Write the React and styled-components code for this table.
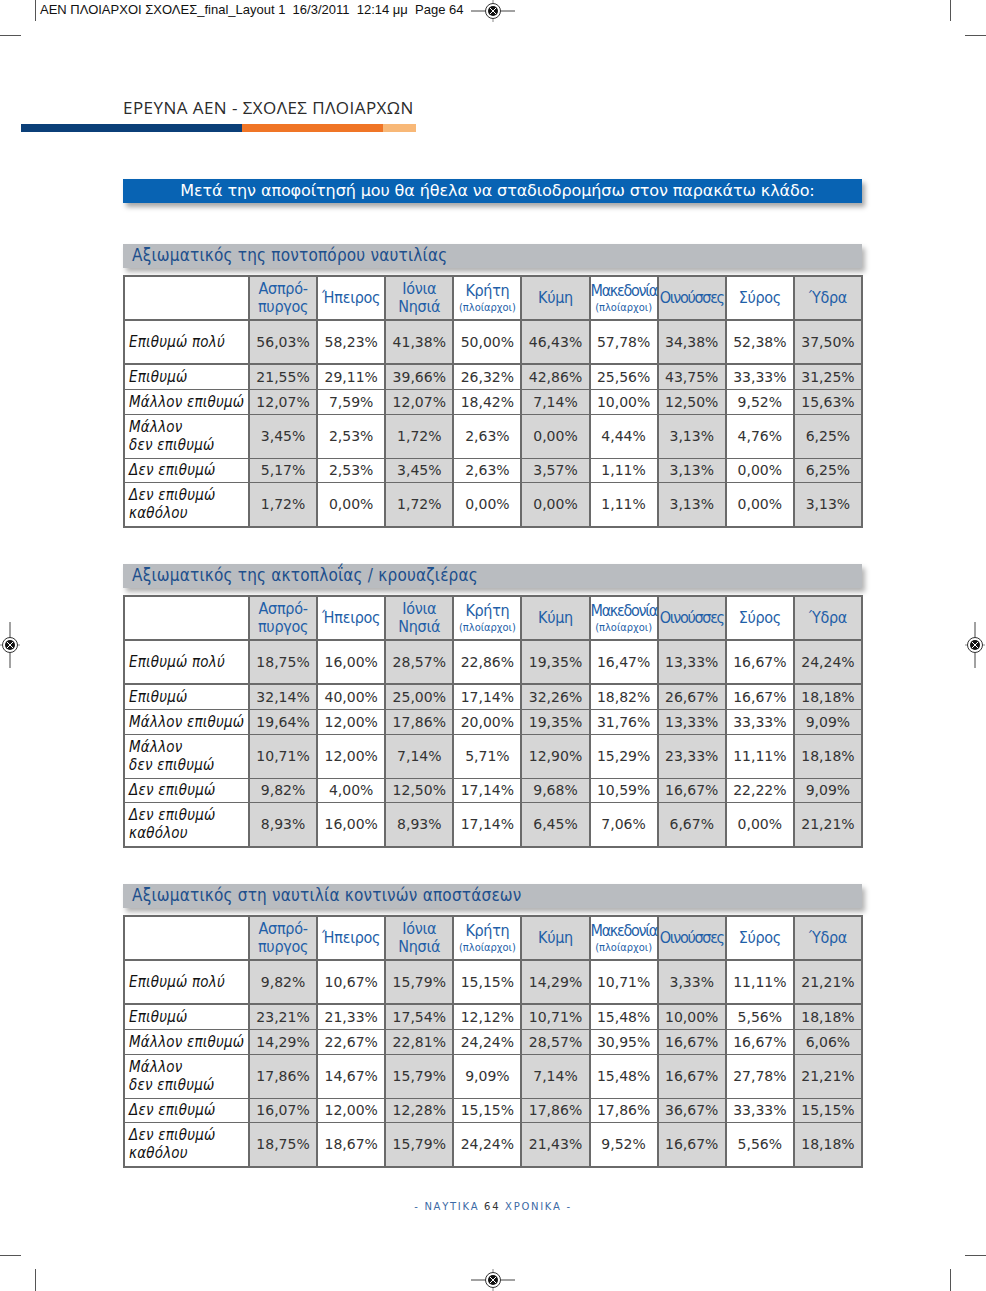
import React from "react";
import styled, { createGlobalStyle } from "styled-components";

const GlobalStyle = createGlobalStyle`
  html, body {
    margin: 0;
    padding: 0;
    background: #ffffff;
  }
`;

const Page = styled.div`
  position: relative;
  width: 986px;
  height: 1291px;
  overflow: hidden;
  background: #ffffff;
  font-family: "DejaVu Sans", sans-serif;
`;

const Marks = styled.svg`
  position: absolute;
  left: 0;
  top: 0;
  pointer-events: none;
`;

const Slug = styled.div`
  height: 20px;
  padding-left: 40px;
  font-family: "Liberation Sans", Arial, sans-serif;
  font-size: 13px;
  line-height: 20px;
  color: #111;
  white-space: pre;
`;

const Content = styled.main`
  display: flex;
  flex-direction: column;
  margin-left: 123px;
  width: 740px;
  padding-top: 78px;
`;

const Heading = styled.h1`
  margin: 0;
  font-family: "Open Sans", sans-serif;
  font-weight: 400;
  font-size: 17px;
  line-height: 20px;
  color: #2b2b2b;
  letter-spacing: 0.45px;
`;

const Stripe = styled.div`
  display: flex;
  margin: 6px 0 0 -102px;
  height: 8px;
  width: 395px;
`;

const StripePart = styled.div`
  width: ${(p) => p.w}px;
  background: ${(p) => p.color};
`;

const QuestionBar = styled.div`
  margin-top: 47px;
  height: 24px;
  width: 739px;
  padding-left: 10px;
  box-sizing: border-box;
  background: #0863b3;
  color: #ffffff;
  font-size: 16px;
  line-height: 24px;
  text-align: center;
  letter-spacing: -0.1px;
  box-shadow: 3px 4px 5px rgba(0, 0, 0, 0.35);
`;

const SectionList = styled.div`
  display: flex;
  flex-direction: column;
  gap: 36px;
  margin-top: 41px;
`;

const Section = styled.section`
  display: flex;
  flex-direction: column;
  gap: 7px;
`;

const SectionBar = styled.div`
  height: 24px;
  width: 739px;
  background: #b9bcc0;
  color: #1d4f8c;
  font-family: "DejaVu Sans Condensed", "DejaVu Sans", sans-serif;
  font-size: 17px;
  line-height: 23px;
  padding-left: 9px;
  box-sizing: border-box;
  letter-spacing: 0.2px;
  box-shadow: 3px 4px 5px rgba(0, 0, 0, 0.3);
`;

const Table = styled.table`
  width: 740px;
  table-layout: fixed;
  border-collapse: collapse;
  border: 2px solid #6a6a6a;
  font-size: 14px;
`;

const Row = styled.tr`
  height: ${(p) => p.h}px;
  border-bottom: ${(p) => (p.strong ? 2 : 1)}px solid #6a6a6a;
`;

const HeadCell = styled.th`
  padding: 0;
  font-family: "DejaVu Sans Condensed", "DejaVu Sans", sans-serif;
  font-weight: 400;
  font-size: 16px;
  line-height: 18px;
  color: #1f5fa8;
  text-align: center;
  letter-spacing: ${(p) => (p.tight ? -1.3 : -0.3)}px;
  white-space: nowrap;
  border-left: 2px solid #6a6a6a;
  background: ${(p) => (p.shade ? "#d6d6d6" : "#ffffff")};
`;

const Small = styled.span`
  display: block;
  font-size: 11px;
  line-height: 15px;
  letter-spacing: 0;
`;

const LabelCell = styled.td`
  padding: 0 0 0 4px;
  font-family: "DejaVu Sans Condensed", "DejaVu Sans", sans-serif;
  font-style: italic;
  font-size: 15px;
  color: #111;
  line-height: 18px;
  text-align: left;
  white-space: nowrap;
  letter-spacing: 0.2px;
`;

const ValueCell = styled.td`
  padding: 0;
  text-align: center;
  color: #333;
  line-height: 18px;
  border-left: 2px solid #6a6a6a;
  background: ${(p) => (p.shade ? "#d6d6d6" : "#ffffff")};
`;

const Footer = styled.div`
  margin-top: 33px;
  text-align: center;
  font-size: 10px;
  letter-spacing: 1.7px;
  color: #3c6aa5;
`;

const FooterNum = styled.span`
  color: #333;
`;

const columns = [
  { name: "Ασπρό-", sub: "πυργος" },
  { name: "Ήπειρος" },
  { name: "Ιόνια", sub: "Νησιά" },
  { name: "Κρήτη", small: "(πλοίαρχοι)" },
  { name: "Κύμη" },
  { name: "Μακεδονία", small: "(πλοίαρχοι)", tight: true },
  { name: "Οινούσσες", tight: true },
  { name: "Σύρος" },
  { name: "Ύδρα" },
];

const rowLabels = [
  ["Επιθυμώ πολύ"],
  ["Επιθυμώ"],
  ["Μάλλον επιθυμώ"],
  ["Μάλλον", "δεν επιθυμώ"],
  ["Δεν επιθυμώ"],
  ["Δεν επιθυμώ", "καθόλου"],
];

const rowHeights = [44, 25, 25, 44, 24, 45];

const sections = [
  {
    title: "Αξιωματικός της ποντοπόρου ναυτιλίας",
    rows: [
      "56,03% 58,23% 41,38% 50,00% 46,43% 57,78% 34,38% 52,38% 37,50%",
      "21,55% 29,11% 39,66% 26,32% 42,86% 25,56% 43,75% 33,33% 31,25%",
      "12,07% 7,59% 12,07% 18,42% 7,14% 10,00% 12,50% 9,52% 15,63%",
      "3,45% 2,53% 1,72% 2,63% 0,00% 4,44% 3,13% 4,76% 6,25%",
      "5,17% 2,53% 3,45% 2,63% 3,57% 1,11% 3,13% 0,00% 6,25%",
      "1,72% 0,00% 1,72% 0,00% 0,00% 1,11% 3,13% 0,00% 3,13%",
    ],
  },
  {
    title: "Αξιωματικός της ακτοπλοΐας / κρουαζιέρας",
    rows: [
      "18,75% 16,00% 28,57% 22,86% 19,35% 16,47% 13,33% 16,67% 24,24%",
      "32,14% 40,00% 25,00% 17,14% 32,26% 18,82% 26,67% 16,67% 18,18%",
      "19,64% 12,00% 17,86% 20,00% 19,35% 31,76% 13,33% 33,33% 9,09%",
      "10,71% 12,00% 7,14% 5,71% 12,90% 15,29% 23,33% 11,11% 18,18%",
      "9,82% 4,00% 12,50% 17,14% 9,68% 10,59% 16,67% 22,22% 9,09%",
      "8,93% 16,00% 8,93% 17,14% 6,45% 7,06% 6,67% 0,00% 21,21%",
    ],
  },
  {
    title: "Αξιωματικός στη ναυτιλία κοντινών αποστάσεων",
    rows: [
      "9,82% 10,67% 15,79% 15,15% 14,29% 10,71% 3,33% 11,11% 21,21%",
      "23,21% 21,33% 17,54% 12,12% 10,71% 15,48% 10,00% 5,56% 18,18%",
      "14,29% 22,67% 22,81% 24,24% 28,57% 30,95% 16,67% 16,67% 6,06%",
      "17,86% 14,67% 15,79% 9,09% 7,14% 15,48% 16,67% 27,78% 21,21%",
      "16,07% 12,00% 12,28% 15,15% 17,86% 17,86% 36,67% 33,33% 15,15%",
      "18,75% 18,67% 15,79% 24,24% 21,43% 9,52% 16,67% 5,56% 18,18%",
    ],
  },
];

// printer's registration target, drawn inside the marks overlay
const RegMark = ({ x, y, vertical }) => (
  <g transform={`translate(${x} ${y})`}>
    {vertical ? (
      <>
        <line x1="0" y1="-23" x2="0" y2="23" stroke="#444" />
        <line x1="-10" y1="0" x2="10" y2="0" stroke="#888" />
      </>
    ) : (
      <>
        <line x1="-22" y1="0" x2="22" y2="0" stroke="#444" />
        <line x1="0" y1="-11" x2="0" y2="11" stroke="#888" />
      </>
    )}
    <circle r="7.5" fill="#fff" stroke="#333" />
    <circle r="5" fill="#111" />
    <path d="M-3 -3 L3 3 M3 -3 L-3 3" stroke="#fff" />
  </g>
);

const CropMarks = () => (
  <Marks width="986" height="1291" viewBox="0 0 986 1291">
    <g stroke="#555" strokeWidth="1">
      <line x1="35.5" y1="0" x2="35.5" y2="21" />
      <line x1="950.5" y1="0" x2="950.5" y2="21" />
      <line x1="0" y1="35.5" x2="21" y2="35.5" />
      <line x1="965" y1="35.5" x2="986" y2="35.5" />
      <line x1="0" y1="1255.5" x2="21" y2="1255.5" />
      <line x1="965" y1="1255.5" x2="986" y2="1255.5" />
      <line x1="35.5" y1="1269" x2="35.5" y2="1291" />
      <line x1="950.5" y1="1269" x2="950.5" y2="1291" />
    </g>
    <RegMark x={493} y={11} />
    <RegMark x={493} y={1280} />
    <RegMark x={10} y={645} vertical />
    <RegMark x={975} y={645} vertical />
  </Marks>
);

const DataTable = ({ rows }) => (
  <Table>
    <colgroup>
      <col style={{ width: 125 }} />
      {columns.map((c) => (
        <col key={c.name} />
      ))}
    </colgroup>
    <tbody>
      <Row h={44} strong>
        <LabelCell />
        {columns.map((c, i) => (
          <HeadCell key={c.name} shade={i % 2 === 0} tight={c.tight}>
            {c.name}
            {c.sub && <br />}
            {c.sub}
            {c.small && <Small>{c.small}</Small>}
          </HeadCell>
        ))}
      </Row>
      {rows.map((r, ri) => (
        <Row key={ri} h={rowHeights[ri]} strong={ri === 0}>
          <LabelCell>
            {rowLabels[ri].map((l, li) => (
              <React.Fragment key={li}>
                {li > 0 && <br />}
                {l}
              </React.Fragment>
            ))}
          </LabelCell>
          {r.split(" ").map((v, vi) => (
            <ValueCell key={vi} shade={vi % 2 === 0}>
              {v}
            </ValueCell>
          ))}
        </Row>
      ))}
    </tbody>
  </Table>
);

const App = () => {
  return (
    <Page>
      <GlobalStyle />
      <Slug>{"AEN ΠΛΟΙΑΡΧΟΙ ΣΧΟΛΕΣ_final_Layout 1  16/3/2011  12:14 μμ  Page 64"}</Slug>

      <Content>
        <Heading>ΕΡΕΥΝΑ ΑΕΝ - ΣΧΟΛΕΣ ΠΛΟΙΑΡΧΩΝ</Heading>
        <Stripe>
          <StripePart w={221} color="#0b3f78" />
          <StripePart w={141} color="#f07526" />
          <StripePart w={33} color="#f8b877" />
        </Stripe>

        <QuestionBar>
          Μετά την αποφοίτησή μου θα ήθελα να σταδιοδρομήσω στον παρακάτω κλάδο:
        </QuestionBar>

        <SectionList>
          {sections.map((s) => (
            <Section key={s.title}>
              <SectionBar>{s.title}</SectionBar>
              <DataTable rows={s.rows} />
            </Section>
          ))}
        </SectionList>

        <Footer>
          - ΝΑΥΤΙΚΑ <FooterNum>64</FooterNum> ΧΡΟΝΙΚΑ -
        </Footer>
      </Content>

      <CropMarks />
    </Page>
  );
};

export default App;
